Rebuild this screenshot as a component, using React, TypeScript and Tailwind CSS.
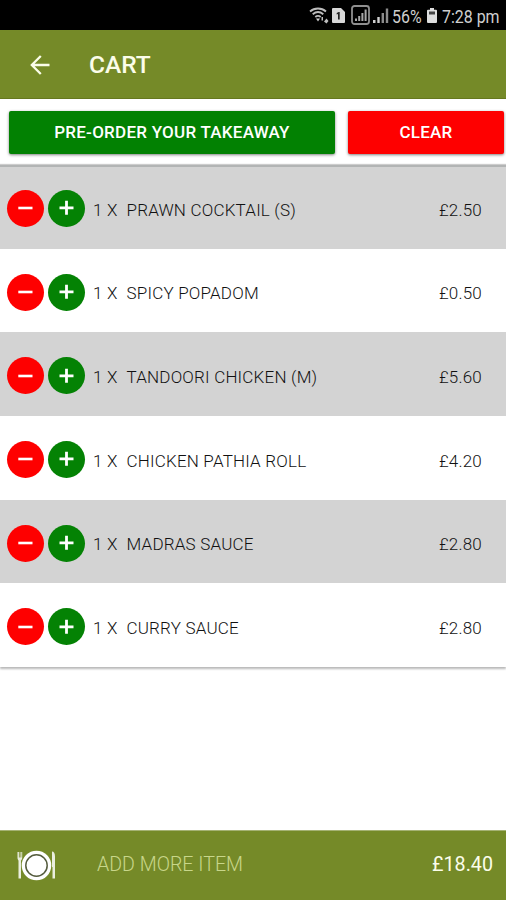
import { useState } from 'react';

interface CartItem {
  name: string;
  qty: number;
  price: number;
}

const initialItems: CartItem[] = [
  { name: 'PRAWN COCKTAIL (S)', qty: 1, price: 2.5 },
  { name: 'SPICY POPADOM', qty: 1, price: 0.5 },
  { name: 'TANDOORI CHICKEN (M)', qty: 1, price: 5.6 },
  { name: 'CHICKEN PATHIA ROLL', qty: 1, price: 4.2 },
  { name: 'MADRAS SAUCE', qty: 1, price: 2.8 },
  { name: 'CURRY SAUCE', qty: 1, price: 2.8 },
];

function StatusBar() {
  return (
    <div className="h-[30px] shrink-0 bg-black flex items-center text-[#cfcfcf]">
      <svg className="ml-[309px] w-5 h-5 shrink-0" viewBox="0 0 20 20" fill="none" stroke="#bdbdbd" strokeWidth="1.8">
        <path d="M1 6.5C5.5 2.5 12.5 2.5 17 6.5" />
        <path d="M3.7 9.2C7 6.4 11 6.4 14.3 9.2" />
        <path d="M6.3 12C8.2 10.4 9.8 10.4 11.7 12" />
        <path d="M7 13.5h4L9 16.5z" fill="#cfcfcf" stroke="none" />
        <path d="M12.5 15v-3H14v3l-1 1zM15 16.5l2.5 2 2-2.5-2-2.5z" fill="#bdbdbd" stroke="none" />
      </svg>
      <svg className="ml-[3px] w-[13px] h-[15px] shrink-0" viewBox="0 0 13 15">
        <path d="M1 0h8l4 4v10a1 1 0 0 1-1 1H1a1 1 0 0 1-1-1V1a1 1 0 0 1 1-1z" fill="#d8d8d8" />
        <path d="M4.7 5l2-1h1v7.5H6V6l-1.3.4z" fill="#222" />
      </svg>
      <svg className="ml-[6px] w-[19px] h-[20px] shrink-0" viewBox="0 0 19 20">
        <rect x="1" y="1" width="17" height="18" rx="2.5" fill="none" stroke="#8f8f8f" strokeWidth="1.8" />
        <path d="M4 13.5h2V16H4zM7.2 11h2v5h-2zM10.4 8h2v8h-2zM13.6 4.5h2V16h-2z" fill="#a8a8a8" />
      </svg>
      <svg className="ml-[3px] w-4 h-[15px] shrink-0" viewBox="0 0 16 15">
        <path d="M0 12h2.5v3H0zM4.3 9h2.4v6H4.3z" fill="#d0d0d0" />
        <path d="M8.6 5H11v10H8.6zM12.8.5h2.4V15h-2.4z" fill="#8c8c8c" />
      </svg>
      <span className="ml-[3px] mt-[3px] w-[29px] origin-left scale-x-[0.91] text-[17.5px] leading-5 whitespace-nowrap">56%</span>
      <svg className="ml-[6px] w-[10px] h-[15px] shrink-0" viewBox="0 0 10 15">
        <path d="M3 0h4v1.7h2a1 1 0 0 1 1 1V14a1 1 0 0 1-1 1H1a1 1 0 0 1-1-1V2.7a1 1 0 0 1 1-1h2z" fill="#dedede" />
        <path d="M2 3.5h6v3H2z" fill="#444" />
      </svg>
      <span className="ml-[5px] mt-[3px] origin-left scale-x-[0.91] text-[17.5px] leading-5 whitespace-nowrap">7:28 pm</span>
    </div>
  );
}

function PlateIcon() {
  return (
    <svg className="mt-px w-10 h-8 shrink-0" viewBox="0 0 40 32" fill="#fff">
      <path d="M1.5 2v6c0 1.5 1 2 1 3v17.5H5V11c0-1 1.200-1.5 1.200-3V2h-.9v5.5h-.8V2h-.8v5.5h-.8V2z" opacity=".85" />
      <path d="M36 1.5c1.800 0 3 1.500 3 5v22h-2.500V17H36z" opacity=".85" />
      <circle cx="20.500" cy="15.500" r="14.800" />
      <circle cx="20.500" cy="15.500" r="10.700" fill="none" stroke="#555c3e" strokeWidth="1.5" />
    </svg>
  );
}

export default function App() {
  const [items, setItems] = useState<CartItem[]>(initialItems);

  const total = items.reduce((sum, item) => sum + item.qty * item.price, 0);

  const changeQty = (index: number, delta: number) => {
    setItems((prev) =>
      prev
        .map((item, i) => (i === index ? { ...item, qty: item.qty + delta } : item))
        .filter((item) => item.qty > 0)
    );
  };

  return (
    <div className="w-full h-screen bg-white flex flex-col overflow-hidden font-[Roboto,sans-serif]">
      <StatusBar />

      <header className="h-[69px] shrink-0 bg-[#758a28] border-b border-[#66781f] flex items-center text-[#fbfdea]">
        <button className="ml-[30px] mt-px w-5 h-5" aria-label="Back">
          <svg className="w-5 h-5" viewBox="0 0 20 20" fill="none" stroke="currentColor" strokeWidth="2.3">
            <path d="M19.5 10H2M10.800 1L1.800 10l9 9" />
          </svg>
        </button>
        <h1 className="ml-[39px] mt-px text-[24.5px] leading-7 font-medium">CART</h1>
      </header>

      <div className="h-[66px] shrink-0 pt-[12px] pl-[9px] pr-[2px] flex gap-[13px] items-start text-white text-[17px] tracking-[0.25px] font-medium">
        <button className="w-[326px] h-[43px] rounded-[2px] bg-[#028102] shadow-[0_1px_3px_rgba(0,0,0,0.5)]">
          PRE-ORDER YOUR TAKEAWAY
        </button>
        <button
          onClick={() => setItems([])}
          className="flex-1 h-[43px] rounded-[2px] bg-[#fe0000] shadow-[0_1px_3px_rgba(0,0,0,0.5)]"
        >
          CLEAR
        </button>
      </div>

      <ul className="shadow-[0_-1px_1px_rgba(0,0,0,0.2),0_2px_2px_rgba(0,0,0,0.28)]">
        {items.map((item, index) => (
          <li
            key={item.name}
            className="h-[83.7px] first:border-t-2 first:border-[#b2b4b4] first:pt-px pt-[3px] flex items-center odd:bg-[#d3d3d3] even:bg-white pl-[7px] pr-6 text-[17px] tracking-[0.2px] font-light text-[#111]"
          >
            <button
              onClick={() => changeQty(index, -1)}
              aria-label="Remove one"
              className="w-[37px] h-[37px] shrink-0 rounded-full bg-[#fe0000] flex items-center justify-center"
            >
              <svg className="w-4 h-4" viewBox="0 0 16 16" stroke="#fff" strokeWidth="2.6">
                <path d="M.3 8h14.200" />
              </svg>
            </button>
            <button
              onClick={() => changeQty(index, 1)}
              aria-label="Add one"
              className="ml-1 w-[37px] h-[37px] shrink-0 rounded-full bg-[#048204] flex items-center justify-center"
            >
              <svg className="w-4 h-4" viewBox="0 0 16 16" stroke="#fff" strokeWidth="2.8">
                <path d="M.5 7.8h14M7.500.8v14" />
              </svg>
            </button>
            <span className="ml-2 w-[33.5px] mt-1 whitespace-nowrap">{item.qty} X</span>
            <span className="flex-1 mt-1">{item.name}</span>
            <span className="mt-1">£{item.price.toFixed(2)}</span>
          </li>
        ))}
      </ul>

      <footer className="mt-auto h-[70px] shrink-0 bg-[#758a28] border-t border-[#a5b274] flex items-center pl-4 pr-[13px]">
        <PlateIcon />
        <span className="ml-[41px] -mt-px flex-1 text-[19.6px] font-light text-[#c8d68a]">ADD MORE ITEM</span>
        <span className="-mt-px text-[19.7px] text-[#fbfdea]">£{total.toFixed(2)}</span>
      </footer>
    </div>
  );
}
